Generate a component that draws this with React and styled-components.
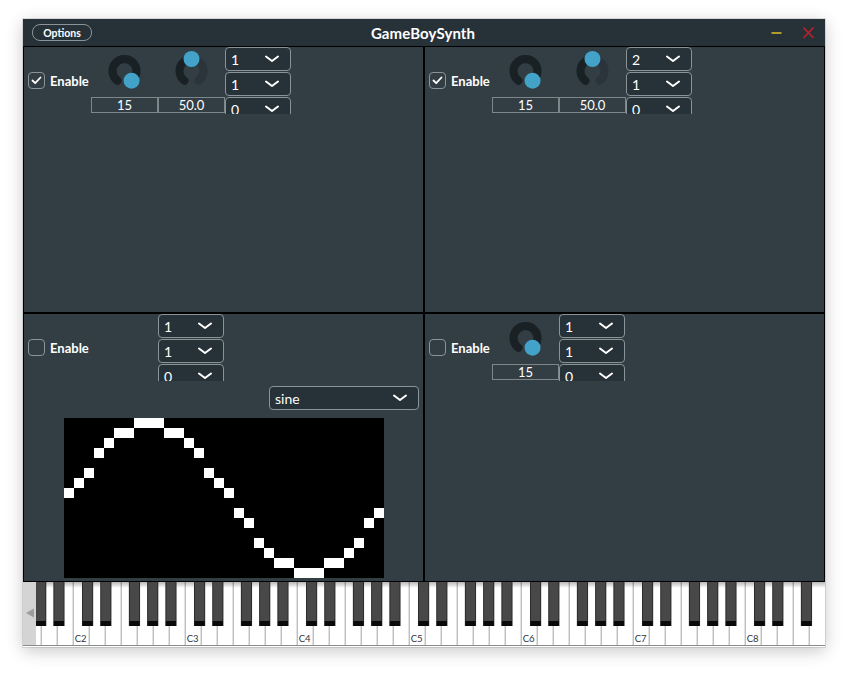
import React from 'react';
import styled, { createGlobalStyle } from 'styled-components';

const GlobalStyle = createGlobalStyle`
  html, body { margin: 0; padding: 0; background: #ffffff; }
  body { font-family: Lato, "Open Sans", "Liberation Sans", sans-serif; }
  * { box-sizing: border-box; }
`;

const Page = styled.div`
  width: 848px;
  height: 674px;
  padding: 19px 0 0 23px;
  background: #ffffff;
`;

const Window = styled.div`
  width: 802px;
  height: 628px;
  display: flex;
  flex-direction: column;
  background: #323e44;
  box-shadow: 0 4px 16px rgba(0, 0, 0, 0.22), 0 0 0 1px rgba(0, 0, 0, 0.1);
  overflow: hidden;
`;

const TitleBar = styled.div`
  flex: none;
  height: 27px;
  background: #263238;
  display: grid;
  grid-template-columns: 1fr auto 1fr;
  align-items: center;
  padding: 0 11px 0 9px;
`;

const OptionsButton = styled.div`
  justify-self: start;
  width: 60px;
  height: 17px;
  border: 1px solid #8a9498;
  border-radius: 8px;
  background: #263238;
  color: #ffffff;
  font-size: 10.5px;
  font-weight: 700;
  display: flex;
  align-items: center;
  justify-content: center;
`;

const Title = styled.div`
  color: #ffffff;
  font-size: 15px;
  font-weight: 700;
  letter-spacing: 0.1px;
`;

const WindowButtons = styled.div`
  justify-self: end;
  display: flex;
  align-items: center;
  gap: 21px;
`;

const PanelGrid = styled.div`
  flex: none;
  display: grid;
  grid-template-columns: 401px 401px;
  grid-template-rows: 267px 269px;
`;

const Panel = styled.div`
  border: 1px solid #000000;
  display: flex;
  flex-direction: column;
  overflow: hidden;
  min-height: 0;
`;

const ControlRow = styled.div`
  flex: none;
  height: 67px;
  display: flex;
`;

const EnableCell = styled.div`
  width: 67px;
  display: flex;
  align-items: center;
  gap: 5px;
  padding-left: 4px;
  color: #ffffff;
  font-size: 13px;
  font-weight: 700;
`;

const CheckBox = styled.div`
  width: 17px;
  height: 17px;
  border: 1px solid #8a9498;
  border-radius: 4px;
  display: flex;
  align-items: center;
  justify-content: center;
`;

const EmptyCell = styled.div`
  width: 67px;
`;

const KnobCell = styled.div`
  width: 67px;
  height: 67px;
  display: flex;
  flex-direction: column;
  overflow: hidden;
`;

const KnobArea = styled.div`
  height: 50px;
  flex: none;
`;

const ValueBox = styled.div`
  height: 16px;
  flex: none;
  border: 1px solid #7d878b;
  color: #ffffff;
  font-size: 13px;
  line-height: 14px;
  text-align: center;
`;

const ComboStack = styled.div`
  width: 67px;
  height: 67px;
  display: flex;
  flex-direction: column;
  gap: 1px;
  overflow: hidden;
`;

const Combo = styled.div`
  flex: none;
  width: ${(p) => p.$width || 66}px;
  height: 24px;
  border: 1px solid #8a9498;
  border-radius: 4px;
  background: #263238;
  color: #ffffff;
  font-size: 14px;
  display: flex;
  align-items: center;
  justify-content: space-between;
  padding: 0 11px 0 5px;
`;

const SineRow = styled.div`
  display: flex;
  justify-content: flex-end;
  padding: 5px 4px 0 0;
`;

const WaveBox = styled.div`
  margin: 8px auto 0;
  width: 320px;
  height: 160px;
`;

const KeyboardBox = styled.div`
  flex: none;
  height: 65px;
  background: #ffffff;
`;

const Chevron = () => (
  <svg width="14" height="8" viewBox="0 0 14 8">
    <path d="M1 1.5 L7 6 L13 1.5" fill="none" stroke="#ffffff" strokeWidth="2" strokeLinecap="round" strokeLinejoin="round" />
  </svg>
);

const Check = () => (
  <svg width="11" height="9" viewBox="0 0 11 9">
    <path d="M1.5 4.5 L4.2 7.2 L9.5 1.5" fill="none" stroke="#ffffff" strokeWidth="1.8" strokeLinecap="round" strokeLinejoin="round" />
  </svg>
);

const Knob = ({ value }) => {
  const cx = 33.5;
  const cy = 24;
  const r = 12;
  const a0 = -144;
  const a1 = 144;
  const av = a0 + value * 288;
  const pt = (a) => [cx + r * Math.sin((a * Math.PI) / 180), cy - r * Math.cos((a * Math.PI) / 180)];
  const arc = (from, to) => {
    const [x1, y1] = pt(from);
    const [x2, y2] = pt(to);
    const large = to - from > 180 ? 1 : 0;
    return `M${x1} ${y1} A${r} ${r} 0 ${large} 1 ${x2} ${y2}`;
  };
  const [tx, ty] = pt(av);
  return (
    <svg width="67" height="50" viewBox="0 0 67 50">
      <path d={arc(a0, a1)} fill="none" stroke="#2a343a" strokeWidth="8" strokeLinecap="round" />
      {value > 0 && <path d={arc(a0, av)} fill="none" stroke="#1a2125" strokeWidth="8" strokeLinecap="round" />}
      <circle cx={tx} cy={ty} r="8" fill="#42a2c8" />
    </svg>
  );
};

const EnableToggle = ({ checked }) => (
  <EnableCell>
    <CheckBox>{checked && <Check />}</CheckBox>
    Enable
  </EnableCell>
);

const KnobControl = ({ value, label }) => (
  <KnobCell>
    <KnobArea>
      <Knob value={value} />
    </KnobArea>
    <ValueBox>{label}</ValueBox>
  </KnobCell>
);

const ComboColumn = ({ values }) => (
  <ComboStack>
    {values.map((v, i) => (
      <Combo key={i}>
        {v}
        <Chevron />
      </Combo>
    ))}
  </ComboStack>
);

const sineRows = [7, 6, 5, 3, 2, 1, 1, 0, 0, 0, 1, 1, 2, 3, 5, 6, 7, 9, 10, 12, 13, 14, 14, 15, 15, 15, 14, 14, 13, 12, 10, 9];

const Waveform = () => (
  <svg width="320" height="160" viewBox="0 0 320 160">
    <rect width="320" height="160" fill="#000000" />
    {sineRows.map((row, i) => (
      <rect key={i} x={i * 10} y={row * 10} width="10" height="10" fill="#ffffff" />
    ))}
  </svg>
);

const Keyboard = () => {
  const W = 16;
  const C2 = 49.7;
  const whites = [];
  for (let k = -3; k <= 46; k++) whites.push(C2 + k * W);
  const offs = [0.58, 1.72, 3.51, 4.65, 5.79];
  const blacks = [];
  for (let o = -1; o <= 6; o++) {
    const x0 = C2 + o * 112;
    offs.forEach((f, j) => {
      if (o === 6 && j >= 3) return;
      blacks.push(x0 + f * W);
    });
  }
  const labels = [2, 3, 4, 5, 6, 7, 8];
  return (
    <svg width="802" height="65" viewBox="0 0 802 65">
      <defs>
        <linearGradient id="topShade" x1="0" y1="0" x2="0" y2="1">
          <stop offset="0" stopColor="#000" stopOpacity="0.28" />
          <stop offset="1" stopColor="#000" stopOpacity="0" />
        </linearGradient>
      </defs>
      <rect x="0" y="0" width="802" height="64" fill="#ffffff" />
      {whites.map((x, i) => (
        <line key={i} x1={x + 0.5} y1="0" x2={x + 0.5} y2="64" stroke="#a3a3a3" strokeWidth="1" />
      ))}
      <rect x="0" y="0" width="802" height="6" fill="url(#topShade)" />
      {labels.map((n, i) => (
        <text key={n} x={C2 + i * 112 + 8} y="59.5" fontSize="9.5" fill="#333333" textAnchor="middle" fontFamily="Lato, 'Liberation Sans', sans-serif">
          {`C${n}`}
        </text>
      ))}
      {blacks.map((x, i) => (
        <g key={i}>
          <rect x={x} y="-1" width="11.2" height="45" fill="#2c2c2c" />
          <rect x={x + 1} y="-1" width="9.2" height="40" fill="#484848" />
          <rect x={x + 0.5} y="39" width="10.2" height="5" fill="#0a0a0a" />
        </g>
      ))}
      <rect x="0" y="0" width="13" height="64" fill="#d4d4d4" />
      <polygon points="3,31 11,26.5 11,35.5" fill="#9e9e9e" />
      <line x1="0" y1="63.5" x2="802" y2="63.5" stroke="#8a8a8a" strokeWidth="1" />
    </svg>
  );
};

export default function App() {
  return (
    <Page>
      <GlobalStyle />
      <Window>
        <TitleBar>
          <OptionsButton>Options</OptionsButton>
          <Title>GameBoySynth</Title>
          <WindowButtons>
            <svg width="11" height="12" viewBox="0 0 11 12">
              <rect x="0.5" y="5" width="10" height="2" fill="#b39a2c" />
            </svg>
            <svg width="11" height="12" viewBox="0 0 11 12">
              <path d="M0.5 0.5 L10.5 11 M10.5 0.5 L0.5 11" stroke="#b4212a" strokeWidth="1.6" />
            </svg>
          </WindowButtons>
        </TitleBar>
        <PanelGrid>
          <Panel>
            <ControlRow>
              <EnableToggle checked />
              <KnobControl value={1} label="15" />
              <KnobControl value={0.5} label="50.0" />
              <ComboColumn values={['1', '1', '0']} />
            </ControlRow>
          </Panel>
          <Panel>
            <ControlRow>
              <EnableToggle checked />
              <KnobControl value={1} label="15" />
              <KnobControl value={0.5} label="50.0" />
              <ComboColumn values={['2', '1', '0']} />
            </ControlRow>
          </Panel>
          <Panel>
            <ControlRow>
              <EnableToggle />
              <EmptyCell />
              <ComboColumn values={['1', '1', '0']} />
            </ControlRow>
            <SineRow>
              <Combo $width={150}>
                sine
                <Chevron />
              </Combo>
            </SineRow>
            <WaveBox>
              <Waveform />
            </WaveBox>
          </Panel>
          <Panel>
            <ControlRow>
              <EnableToggle />
              <KnobControl value={1} label="15" />
              <ComboColumn values={['1', '1', '0']} />
            </ControlRow>
          </Panel>
        </PanelGrid>
        <KeyboardBox>
          <Keyboard />
        </KeyboardBox>
      </Window>
    </Page>
  );
}
